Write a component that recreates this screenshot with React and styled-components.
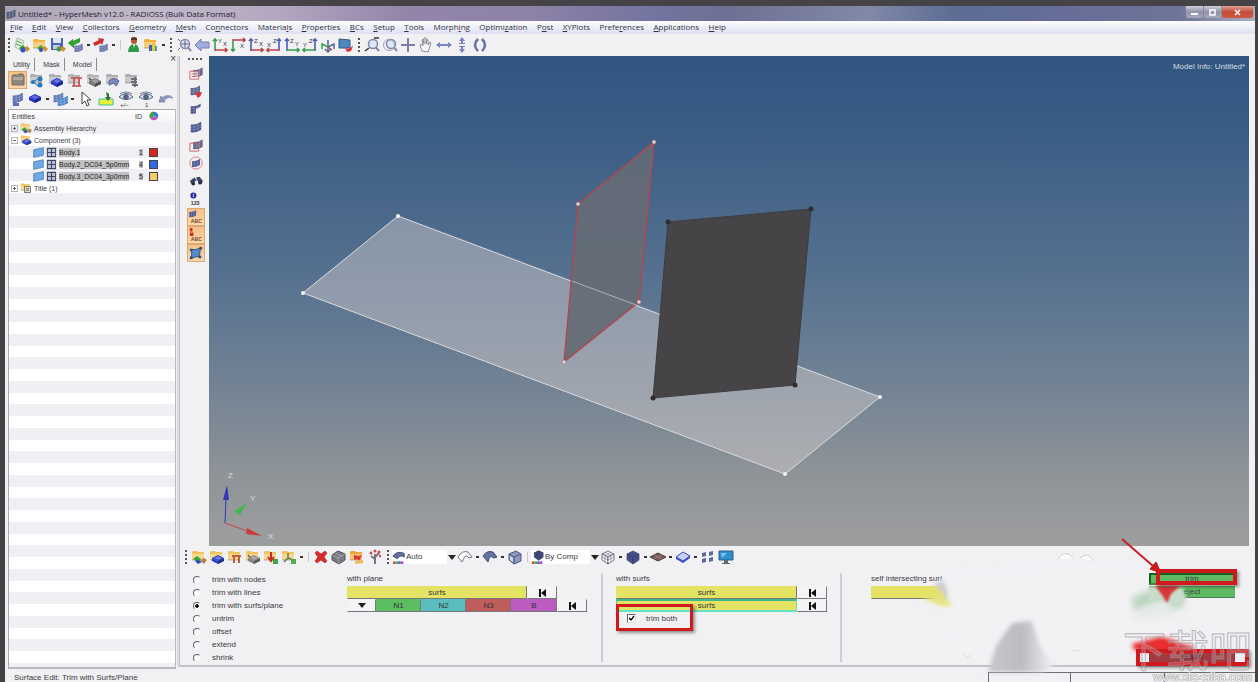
import React from "react";
import styled, { createGlobalStyle, css } from "styled-components";

const ui = `"Liberation Sans", Arial, sans-serif`;
const menuFont = `"Open Sans", "Noto Sans", sans-serif`;

const Global = createGlobalStyle`
  * { box-sizing: border-box; }
  body { margin: 0; background: #454346; font-family: ${ui}; font-size: 8px; line-height: 12px; color: #3c3b3f; }
  button, select, input { font: inherit; color: inherit; margin: 0; padding: 0; }
  svg { flex-shrink: 0; }
`;

const Page = styled.div`
  position: relative;
  display: flex;
  min-height: 100vh;
  padding: 6px 3px 0 5px;
  overflow: hidden;
`;
const Window = styled.div`
  flex: 1;
  min-width: 0;
  display: flex;
  flex-direction: column;
  background: #f1f0f3;
`;
const TitleBar = styled.header`
  display: flex;
  align-items: center;
  height: 15px;
  padding: 0 2px 0 0;
  gap: 1px;
  font-family: ${menuFont};
  color: #1f1b2c;
  background: linear-gradient(90deg, #aaa3b5 0, #c2bacb 12%, #b3a6bf 22%, #9385a9 32%, #8d82a8 42%, #73749f 52%, #6f7094 58%, #8189a8 69%, #5c6d94 76%, #666d98 85%, #6f7598 94%, #a8adc0 100%);
`;
const Title = styled.h1`
  flex: 1;
  margin: 0;
  font-size: 8px;
  font-weight: 400;
`;
const WinButton = styled.button`
  align-self: flex-start;
  display: flex;
  align-items: center;
  justify-content: center;
  width: ${(p) => (p.$close ? 31 : 17)}px;
  height: 12px;
  border: 0;
  border-radius: 0 0 2px 2px;
  background: ${(p) => (p.$close ? "linear-gradient(#dba295, #c64a36 50%, #cf5a44)" : "linear-gradient(#cfcfdb, #9292a8 50%, #a9a9bd)")};
`;
const MenuBar = styled.nav`
  height: 13px;
  padding-left: 5px;
  font-family: ${menuFont};
  background: linear-gradient(#fdfdff, #dde1f1);
`;
const MenuList = styled.div`
  display: flex;
  align-items: center;
  justify-content: space-between;
  max-width: 716px;
`;
const MenuItem = styled.button`
  border: 0;
  background: none;
  line-height: 12px;
  color: #33333d;
  white-space: nowrap;
`;
const Bar = styled.div`
  display: flex;
  align-items: center;
  flex-wrap: wrap;
  min-height: ${(p) => p.$h || 22}px;
  padding-left: ${(p) => p.$pad || 0}px;
`;
const Tool = styled.button`
  display: flex;
  align-items: center;
  justify-content: center;
  width: ${(p) => p.$w || 18}px;
  height: 18px;
  border: 0;
  background: none;
  ${(p) => p.$on && css`background: linear-gradient(#f6bf83, #fbd9ae); box-shadow: inset 0 0 0 1px #dca874;`}
`;
const Caret = styled.span`
  width: 3px;
  height: 2px;
  margin: 0 2px;
  background: #333;
`;
const Separator = styled.span`
  width: 1px;
  height: 10px;
  margin: 0 3px;
  background: #c9c8cc;
`;
const Grip = styled.span`
  ${(p) => p.$flat
    ? css`width: 16px; height: 2px; background: repeating-linear-gradient(90deg, #555 0 2px, transparent 2px 4px);`
    : css`width: 2px; height: 14px; margin: 0 3px; background: repeating-linear-gradient(#555 0 2px, transparent 2px 4px);`}
`;
const Body = styled.main`
  flex: 1;
  display: flex;
  min-height: 0;
`;
const Side = styled.aside`
  width: 173px;
  display: flex;
  flex-direction: column;
  padding: 0 2px 1px 3px;
  font-size: 7px;
`;
const TabRow = styled.div`
  display: flex;
  align-items: flex-end;
  height: 15px;
`;
const Tab = styled.button`
  height: 13px;
  padding: 0 4px 0 ${(p) => (p.$first ? 5 : 8)}px;
  border: 0;
  border-right: 1px solid #8c8b90;
  background: none;
`;
const CloseTab = styled.button`
  align-self: flex-start;
  margin-left: auto;
  height: 6px;
  border: 0;
  background: none;
  line-height: 4px;
  font-size: 10px;
`;
const TreeBox = styled.div`
  flex: 1;
  margin-top: 1px;
  border: 1px solid #a9a8ad;
  border-width: 1px 1px 2px 1px;
  border-color: #a9a8ad #bab9be #bab9be #a9a8ad;
  background: repeating-linear-gradient(#f0eff3 0 12px, #fff 12px 24px, #f0eff3 24px 36px, #fff 36px 47px) 0 12px;
`;
const Tree = styled.table`
  width: 100%;
  border-collapse: collapse;
  table-layout: fixed;
  th, td { height: 12px; padding: 0; font-weight: 400; text-align: left; line-height: 11px; vertical-align: middle; }
  thead { background: linear-gradient(#fff, #f3f2f5); }
  th { padding-left: 3px; }
  th + th { padding-left: 0; }
`;
const Col = styled.col`
  width: ${(p) => (p.$w ? `${p.$w}px` : "auto")};
`;
const Node = styled.div`
  display: flex;
  align-items: center;
  height: 11px;
  padding-left: ${(p) => (p.$deep ? 24 : 2)}px;
  gap: 2px;
  white-space: nowrap;
`;
const NodeName = styled.span`
  height: 9px;
  line-height: 9px;
  ${(p) => p.$sel && css`background: #c2c1c4; color: #222;`}
`;
const Expander = styled.span`
  width: 7px;
  height: 7px;
  border: 1px solid #b5b4b9;
  background:
    linear-gradient(#666, #666) center / 3px 1px no-repeat,
    ${(p) => (p.$open ? "none" : "linear-gradient(#666, #666) center / 1px 3px no-repeat")};
`;
const Swatch = styled.span`
  display: block;
  width: 9px;
  height: 9px;
  margin-left: 2px;
  border: 1px solid #45434a;
  background: ${(p) => p.$c};
`;
const Work = styled.section`
  flex: 1;
  min-width: 0;
  display: flex;
  flex-direction: column;
  margin: 0 6px 3px 1px;
  border-left: 1px solid #c3c2c7;
  border-bottom: 2px solid #c3c2c7;
  box-shadow: -2px 0 0 #dddce0;
`;
const Stage = styled.div`
  flex: 1;
  display: flex;
  min-height: 0;
`;
const Rail = styled.div`
  width: 29px;
  display: flex;
  flex-direction: column;
  align-items: center;
  padding: 2px 0 0 2px;
`;
const RailGrip = styled(Grip)`
  margin-bottom: 4px;
`;
const Viewport = styled.div`
  position: relative;
  flex: 1;
  min-width: 0;
  min-height: 490px;
  background: linear-gradient(#2f5580 0%, #3d5f86 18%, #56718f 45%, #738394 68%, #8f9498 86%, #9b9c9e 97%);
`;
const Scene = styled.svg`
  position: absolute;
  inset: 0;
  width: 100%;
  height: 100%;
`;
const ModelInfo = styled.div`
  position: absolute;
  top: 5px;
  right: 4px;
  color: #d5dde6;
`;
const Picker = styled.label`
  display: flex;
  align-items: center;
  width: ${(p) => p.$w}px;
  height: 14px;
  background: linear-gradient(#fff, #fff) 0 0 / calc(100% - 9px) 100% no-repeat;
`;
const Select = styled.select`
  flex: 1;
  min-width: 0;
  height: 14px;
  border: 0;
  appearance: none;
  background: none;
`;
const Panel = styled.form`
  display: grid;
  grid-template-columns: 167px 256px 239px minmax(100px, 1fr) 100px;
  min-height: 97px;
  padding-top: 5px;
`;
const Options = styled.fieldset`
  margin: 0;
  padding: 0 0 0 13px;
  border: 0;
`;
const Option = styled.label`
  display: flex;
  align-items: center;
  gap: 11px;
  height: 13px;
`;
const Radio = styled.input`
  appearance: none;
  width: 8px;
  height: 8px;
  border: 1px solid;
  border-color: #66656a #f4f4f6 #f4f4f6 #66656a;
  border-radius: 50%;
  background: #fbfafc;
  &:checked { background: radial-gradient(#222 0 2px, #fff 2px); }
`;
const Group = styled.div`
  margin-bottom: 3px;
  ${(p) => p.$rule && css`border-right: 2px solid #cfced2;`}
  ${(p) => p.$pad && css`padding-left: ${p.$pad}px;`}
`;
const Line = styled.div`
  display: flex;
  height: 13px;
`;
const Key = styled.button`
  display: flex;
  align-items: center;
  justify-content: center;
  width: ${(p) => p.$w}px;
  height: 13px;
  border: 1px solid;
  border-color: #f4f4f4 #77767a #77767a #f4f4f4;
  background: ${(p) => p.$c || "#f4f3f6"};
  color: #33333a;
  ${(p) => p.$c && css`border-top-color: ${p.$c}; border-left-color: ${p.$c};`}
  ${(p) => p.$active && css`border-color: #3fb98c #62e3c6 #62e3c6 #4cc59c; border-width: 2px 1px;`}
`;
const Actions = styled.div`
  display: flex;
  flex-direction: column;
`;
const Action = styled.div`
  position: relative;
  height: 13px;
  ${(p) => p.$last && css`margin: auto 0 1px;`}
`;
const ActionButton = styled.button`
  width: 86px;
  height: 12px;
  line-height: 8px;
  border: 1px solid ${(p) => (p.$focus ? "#16601f" : "#62ad67")};
  border-bottom-color: #487c4a;
  border-width: ${(p) => (p.$focus ? 2 : 1)}px;
  background: #5fbb63;
  ${(p) => p.$danger && css`background: #a33a42; border-color: #8f343b; color: #4a1418;`}
`;
const Mark = styled.span`
  position: absolute;
  z-index: 3;
  top: ${(p) => p.$t}px;
  left: ${(p) => p.$l}px;
  width: ${(p) => p.$w}px;
  height: ${(p) => p.$h}px;
  border: ${(p) => p.$b || 3}px solid #d0191d;
  box-shadow: 2px 2px 3px rgba(0, 0, 0, 0.4);
  pointer-events: none;
`;
const Check = styled.label`
  position: relative;
  display: flex;
  align-items: center;
  gap: 10px;
  width: 77px;
  height: 13px;
  padding-left: 11px;
`;
const Tick = styled.input`
  appearance: none;
  width: 9px;
  height: 9px;
  border: 1px solid;
  border-color: #66656a #ddd #ddd #66656a;
  background: #fff;
  &:checked { background: #fff url("data:image/svg+xml,%3Csvg xmlns='http://www.w3.org/2000/svg' viewBox='0 0 7 7'%3E%3Cpath d='M1 3l2 2 3-4' fill='none' stroke='%23000' stroke-width='1.4'/%3E%3C/svg%3E"); }
`;
const Status = styled.footer`
  display: flex;
  align-items: center;
  height: 14px;
  padding-left: 9px;
`;
const StatusText = styled.span`
  flex: 1;
  padding-top: 2px;
`;
const StatusCell = styled.span`
  align-self: flex-end;
  width: ${(p) => p.$w}px;
  height: 12px;
  border: solid #6c6b6f;
  border-width: 1px 0 0 1px;
`;
const Overlay = styled.svg`
  position: absolute;
  z-index: 2;
  right: 0;
  bottom: 0;
  width: 418px;
  height: 152px;
  pointer-events: none;
`;
const Watermark = styled.div`
  position: absolute;
  z-index: 4;
  right: 6px;
  bottom: 0;
  text-align: right;
  pointer-events: none;
`;
const MarkName = styled.div`
  font-family: "Noto Sans CJK SC", sans-serif;
  font-size: 43px;
  line-height: 44px;
  color: rgba(245, 245, 245, 0.2);
  -webkit-text-stroke: 1px rgba(150, 146, 150, 0.65);
`;
const MarkSite = styled.div`
  font-size: 12px;
  line-height: 14px;
  color: #fafafa;
  text-shadow: 0 0 1px #777, 0 0 1px #777;
`;

/* Shapes shared by the toolbar icons, on a 16 x 16 grid */
const Folder = ({ c = "#f2c45c" }) => (
  <g><path d="M1 3l1-1h4l1 1h6v8H1z" fill={c} /><path d="M1 5h12v6H1z" fill="#fff" opacity=".35" /><path d="M1 11h12" stroke="#000" opacity=".25" /></g>
);
const Slab = ({ c = "#2737c8", y = 0 }) => (
  <g transform={`translate(0 ${y})`}><path d="M3 9l6-3 6 3-6 3z" fill={c} /><path d="M3 9v3l6 3v-3z" fill={c} /><path d="M15 9v3l-6 3v-3z" fill={c} /><path d="M9 12v3l6-3V9z" fill="#000" opacity=".35" /><path d="M5 9l4-2 4 2-4 2z" fill="#fff" opacity=".3" /></g>
);
const Sheet = ({ c = "#5563a0", x = 0, y = 0, s = 1 }) => (
  <g transform={`translate(${x} ${y}) scale(${s})`}><path d="M2 5q6 1 12-3v9q-6 4-12 3z" fill={c} /><path d="M2 8q6 1 12-3M2 11q6 1 12-3M6 5v9M10 4v9" stroke="#dfe4f5" strokeWidth=".6" fill="none" opacity=".5" /></g>
);
const Cube = ({ c = "#4b5795" }) => (
  <g stroke="#26304f" strokeWidth=".6"><path d="M2 5l6-3 6 3-6 3z" fill={c} /><path d="M2 5v6l6 4V8z" fill={c} /><path d="M14 5v6l-6 4V8z" fill={c} /><path d="M5 3.500l6 3V13M11 3.500l-6 3V13M2 8l6 3 6-3" fill="none" opacity=".6" /></g>
);
const Arrow = ({ c, d }) => <path d={d} fill={c} stroke="#000" strokeOpacity=".2" strokeWidth=".5" />;
const Lens = () => (
  <g fill="none" stroke="#8288a8"><circle cx="9" cy="7" r="4.500" fill="#dfe6f5" strokeWidth="1.500" /><path d="M12 10.500l3 3.500" strokeWidth="2" /></g>
);
const Axes = ({ a = "#35a04a", b = "#c23f4a", m, t, u, tx = 3, ty = 6, ux = 11, uy = 9 }) => (
  <g><g fill="none" strokeWidth="1.600" transform={m}><path d="M3 14V2M1 4l2-2 2 2" stroke={a} /><path d="M3 13h12M13 11l2 2-2 2" stroke={b} /></g>
    <text x={tx + 3} y={ty} fontSize="6" fill="#333">{t}</text><text x={ux} y={uy} fontSize="6" fill="#333">{u}</text></g>
);
const Eye = () => (
  <g fill="none" stroke="#55607d"><path d="M1 6q7-7 14 0q-7 5-14 0z" fill="#dde3ee" /><circle cx="8" cy="6" r="2.400" fill="#54617f" /><path d="M2 3q6-4 12 0" strokeWidth=".8" /></g>
);
const Palette = () => (
  <g><path d="M1 13h3v3H1z" fill="#d43" /><path d="M4 13h3v3H4z" fill="#4b4" /><path d="M7 13h3v3H7z" fill="#46d" /><path d="M10 13h3v3h-3z" fill="#b4c" /></g>
);

const art = {
  app: <Sheet c="#4b5670" />,
  newFile: <><path d="M3 1l7 3-3 9-6-3z" fill="#e3f0e3" stroke="#7fae82" strokeWidth=".7" /><path d="M3 4l5 2M2 7l5 2" stroke="#4ea64c" /><path d="M5 11l4-3 3 3-4 3z" fill="#3f9d3c" /><path d="M10 11l3-2 3 3-3 3z" fill="#c99336" /><circle cx="9" cy="13" r="2.500" fill="#3451c0" /></>,
  open: <><Folder c="#efb740" /><path d="M5 11l4-3 3 3-4 3z" fill="#49a13f" /><path d="M10 11l3-2 3 3-3 3z" fill="#c99336" /><circle cx="9" cy="13" r="2" fill="#3451c0" /></>,
  save: <><path d="M1 1h12v12H1z" fill="#4a63b8" /><path d="M3 1h8v5H3z" fill="#dfe6f6" /><path d="M3 8h7v4H3z" fill="#c7cde0" /><circle cx="9" cy="12" r="2.500" fill="#3f9d3c" /><path d="M10 11l3-2 3 3-3 3z" fill="#c99336" /></>,
  importI: <><Sheet x={5} y={5} s={0.7} c="#6873a8" /><Arrow c="#2fa52d" d="M0 6l5-4v2l7-3v4L6 8v3z" /></>,
  exportI: <><Sheet x={5} y={5} s={0.7} c="#6873a8" /><Arrow c="#d43232" d="M11 2L5 1l1 2-6 3 2 3 6-3 1 2z" /></>,
  user: <><circle cx="9" cy="4" r="3" fill="#b3572e" /><path d="M6 1q3-2 6 0v2H6z" fill="#59361f" /><path d="M3 15q1-8 6-8t5 8z" fill="#2f9a45" /><path d="M8 7h2l-1 4z" fill="#fff" /></>,
  profile: <><Folder c="#eeb13c" /><path d="M6 8h3v6H6z" fill="#3764bd" /><path d="M9 6h3v8H9z" fill="#e6c33a" /><path d="M12 9h2v5h-2z" fill="#39a6a0" /></>,
  fit: <><Lens /><path d="M9 3.500v7M5.500 7h7M2 2l2 2M2 13l2-2" stroke="#5a6180" /></>,
  back: <path d="M1 8l6-6v3h8v6H7v3z" fill="#a4add9" stroke="#7580b4" />,
  yx: <Axes t="Y" u="X" />,
  xyDown: <Axes t="" u="X" m="matrix(1 0 0 -1 0 16)" ux={10} uy={11} />,
  zx: <Axes t="Z" u="X" a="#4560b8" />,
  xz: <Axes t="Z" u="X" a="#4560b8" m="matrix(-1 0 0 1 16 0)" tx={4} ux={1} uy={10} />,
  zy: <Axes t="Z" u="Y" a="#4560b8" b="#35a04a" />,
  yz: <Axes t="Z" u="Y" a="#4560b8" b="#35a04a" m="matrix(-1 0 0 1 16 0)" tx={4} ux={1} uy={10} />,
  iso: <g fill="none" strokeWidth="1.500"><path d="M8 10V3" stroke="#4560b8" /><path d="M8 10l-6-3v5" stroke="#35a04a" /><path d="M8 10l6-3v5M8 10v5M5 12l3 3 3-3" stroke="#5a6f96" /><path d="M8 10l4 3" stroke="#c23f4a" /></g>,
  screen: <><path d="M1 2l11 1v8L1 11z" fill="#4d87bd" stroke="#35587e" /><path d="M7 11l3 1 5-3-2 5-4 1z" fill="#d32f35" /></>,
  zoomOut: <><Lens /><path d="M1 14l4-3M10 1h5" stroke="#333" strokeWidth="1.500" /></>,
  zoomIn: <><Lens /><circle cx="7" cy="8" r="5.500" fill="none" stroke="#9aa0bd" /></>,
  plus: <path d="M8 1v14M1 8h14" stroke="#7c81a0" strokeWidth="2" />,
  hand: <path d="M4 14L2 8l1-1 2 2-1-6 1-1 1 5V1h2v6l1-5 1 1v5l2-3 1 1-3 9z" fill="#f7f6f8" stroke="#7a7880" strokeWidth=".8" />,
  horiz: <path d="M0 8l4-3v2h8V5l4 3-4 3V9H4v2z" fill="#7a83c2" />,
  vert: <path d="M8 0l3 4H9v2h2v1H5V6h2V4H5zM8 16l3-4H9v-2h2V9H5v1h2v2H5z" fill="#7a83c2" />,
  rotate: <g fill="none" stroke="#6971a3" strokeWidth="2.500"><path d="M6 2Q0 8 6 14M10 2q6 6 0 12" /></g>,
  vFolder: <g><path d="M2 4l1-1h5l1-1h4l1 2v9H2z" fill="#8e877d" stroke="#746d64" /><path d="M3 5h10v3H3z" fill="#c4bdb2" opacity=".6" /></g>,
  vTree: <><Folder c="#aeaeb2" /><path d="M4 10l5-3M4 10l5 4" stroke="#2678bd" /><g fill="#2678bd"><circle cx="4" cy="10" r="2" /><circle cx="11" cy="7" r="2.500" /><circle cx="11" cy="13" r="2.500" /></g></>,
  vComp: <><Folder c="#aeaeb2" /><Slab /></>,
  vProp: <><Folder c="#b4b4b7" /><path d="M4 6h11M7 6v8M12 6v8M5 14h9" stroke="#c24a43" strokeWidth="1.600" /></>,
  vMat: <><Folder c="#b4b4b7" /><path d="M3 6l4 4M4 11l3-3" stroke="#555" strokeWidth="1.500" /><Slab c="#77777c" /></>,
  vLoad: <><Folder c="#aeaeb2" /><path d="M4 9q5-5 10 0l-3 5-2-3-5 2z" fill="#8088bd" stroke="#565f98" /></>,
  vList: <><Folder c="#aeaeb2" /><path d="M7 7h6M7 10h6M8 13h6M11 5v10" stroke="#6b6b70" strokeWidth="1.800" /></>,
  sheetTall: <><Sheet x={2} y={0} s={0.85} c="#5872b0" /><path d="M4 12h6v3H4z" fill="#5872b0" /></>,
  slab: <g transform="translate(-1 -3)"><Slab c="#2130cb" /></g>,
  sheets: <><Sheet s={0.8} c="#6078b6" /><Sheet x={4} y={3} s={0.85} c="#4d87cb" /></>,
  cursor: <path d="M4 1v12l3-3 2 5 2-1-2-5h4z" fill="#fff" stroke="#444" />,
  put: <><path d="M1 8h14v6H1z" fill="#e6f03a" stroke="#35c6b0" /><path d="M8 1l3 2v3h2l-3 4-3-4h2z" fill="#2e6b2e" /></>,
  eyePm: <><Eye /><text x="2" y="16" fontSize="6" fill="#333">+/−</text></>,
  eyeOne: <><Eye /><text x="7" y="16" fontSize="6" fill="#333">1</text></>,
  undo: <path d="M1 11l2-6 1 2q6-5 11 0-5-2-9 2l1 2z" fill="#9095bd" stroke="#666c9c" strokeWidth=".6" />,
  mGeom: <><Sheet x={3} y={0} s={0.9} c="#5b5f83" /><path d="M1 6h10v9H1zM3 9h6M3 12h6" fill="#fff" fillOpacity=".6" stroke="#cf5a5c" /></>,
  mMask: <><Sheet s={0.9} c="#58628a" /><path d="M7 10l2-1 2 1 4-1-2 5-3 2z" fill="#d6333c" /></>,
  mRev: <><Sheet c="#49558b" s={0.95} /><path d="M8 8l6-3v6l-6 3z" fill="#f0f0f5" /></>,
  mAll: <Sheet c="#4c598f" />,
  mBox: <><Sheet x={3} s={0.9} c="#5b5f83" /><path d="M1 6h10v9H1z" fill="none" stroke="#cf5a5c" /></>,
  mCirc: <><Sheet x={2} y={2} s={0.75} c="#46548b" /><circle cx="8" cy="8" r="7" fill="none" stroke="#d97478" /></>,
  find: <g fill="#3b4667"><path d="M1 8l5-4 3 3-3 2v3H3z" /><path d="M8 4l4-1 4 5-2 3-3 1-1-4z" /><circle cx="5" cy="11" r="2" fill="#222a45" /><circle cx="13" cy="10" r="2" fill="#222a45" /></g>,
  num: <><circle cx="5" cy="4" r="3.500" fill="#2830a5" /><path d="M5 2v4" stroke="#dde" /><text x="2" y="15" fontSize="6" fontWeight="700" fill="#333">123</text></>,
  abcMesh: <><Sheet x={-1} y={-1} s={0.65} c="#485590" /><text x="2" y="15" fontSize="6" fontWeight="700" fill="#7b4c2e">ABC</text></>,
  abcRed: <><path d="M1 0h3v4H1zM1 5h4v4H1z" fill="#c62e2a" /><text x="2" y="15" fontSize="6" fontWeight="700" fill="#7b4c2e">ABC</text></>,
  surfHi: <><path d="M3 4q5 1 10-2l-1 10q-5 0-9 2z" fill="#568ace" stroke="#294983" /><g fill="#324c7a"><path d="M1 3h3v3H1zM12 1h3v3h-3zM1 12h3v3H1zM11 11h3v3h-3z" /></g></>,
  fAsm: <><Folder /><path d="M2 10l4-3 4 3-4 3z" fill="#3da33b" /><path d="M4 12l4-1 3 2-4 2z" fill="#2b49c0" /><path d="M9 11l4-2 3 2-3 4z" fill="#b98345" /></>,
  fComp: <><Folder /><Slab c="#2742c8" /></>,
  fProp: <><Folder /><path d="M5 7h9M7 7v7M12 7v7" stroke="#b9603f" strokeWidth="2" /></>,
  fMat: <><Folder /><path d="M3 6l5 5" stroke="#664" strokeWidth="1.500" /><Slab c="#88867c" /></>,
  fLoad: <><Folder /><path d="M8 3v7M5 8l3 4 3-4" stroke="#cb2a25" strokeWidth="2" fill="none" /><path d="M10 10h5v5h-5z" fill="#43a646" /></>,
  fSys: <><Folder /><path d="M7 4v5l-4 4M7 9l5 2" stroke="#607d55" strokeWidth="1.500" fill="none" /><path d="M10 10h5v5h-5z" fill="#55ab50" /></>,
  del: <path d="M2 4l2-2 4 3 4-3 2 2-3 4 3 4-2 2-4-3-4 3-2-2 3-4z" fill="#db2a2d" stroke="#a91e22" strokeWidth=".6" />,
  organize: <><path d="M1 6l6-4 7 3v6l-6 4-7-4z" fill="#777a83" stroke="#4e5058" /><path d="M1 6l6 3 7-4M7 9l1 6M4 4l7 3" stroke="#bbb" fill="none" opacity=".6" /></>,
  renumber: <><Folder c="#f0a532" /><path d="M5 6l4 1 4-1-3 6-2-2-3 1z" fill="#d6372e" /><path d="M6 12l8-1v3l-8 1z" fill="#edbc50" /></>,
  tree: <g fill="none"><path d="M8 15V5M8 10L4 7M8 8l4-4" stroke="#77737a" strokeWidth="2" /><g fill="#ce4b50"><circle cx="4" cy="4" r="1.500" /><circle cx="8" cy="2" r="1.500" /><circle cx="12" cy="3" r="1.500" /><circle cx="13" cy="7" r="1.200" /></g></g>,
  autoI: <><path d="M1 7q5-7 13-3v4q-5-3-8 2z" fill="#65719e" stroke="#3f4a78" /><Palette /></>,
  wire: <path d="M1 8q4-7 10-5l4 5-3 1q-3-4-5 0l-2 4z" fill="#f8f8fa" stroke="#77767d" />,
  shade: <path d="M1 7q4-6 10-4l4 5-3 1q-3-3-5 0l-1 4z" fill="#67739f" stroke="#414c78" />,
  box: <><path d="M2 5l7-3 5 3v7l-7 3-5-4z" fill="#8e98c5" stroke="#4c567f" /><path d="M2 5l5 3 7-3M7 8v7" stroke="#4c567f" fill="none" /><path d="M3 7l3 2v4l-3-2z" fill="#d5dbef" /></>,
  compI: <><g transform="translate(2 -1) scale(.85)"><Cube c="#414c80" /></g><Palette /></>,
  wireCube: <Cube c="#f6f6f8" />,
  solidCube: <Cube />,
  layer: <><path d="M0 8l8-4 8 4-8 4z" fill="#775b59" stroke="#4a3736" /><path d="M4 6l8 4M12 6l-8 4" stroke="#b28c86" strokeWidth=".6" /></>,
  layer2: <><path d="M1 8l7-5 7 4-7 5z" fill="#c9cff8" stroke="#3846bb" /><path d="M1 8v2l7 4 7-5V7l-7 5z" fill="#3e4dc5" /></>,
  shrinkI: <g fill="#5d6b9c"><path d="M2 4l4-1v4L2 8zM9 3l4-1v4L9 7zM2 10l4-1v4l-4 1zM9 9l4-1v4l-4 1z" /></g>,
  monitor: <><path d="M1 2h14v9H1z" fill="#2f8fcb" stroke="#2b5f87" /><path d="M3 4h6l-5 5z" fill="#7cc4e8" /><path d="M6 11h4v3H6zM4 14h8v1H4z" fill="#5c6b76" /></>,
  rgb: <><path d="M8 8V1a7 7 0 0 1 6 10z" fill="#2f7de0" /><path d="M8 8l6 3a7 7 0 0 1-12 1z" fill="#c94fb8" /><path d="M8 8l-6 4A7 7 0 0 1 8 1z" fill="#3c9f4a" /><circle cx="8" cy="8" r="1" fill="#f2e04a" /></>,
  surf: <path d="M1 4l14-3v11L1 15z" fill="#6ea9e6" stroke="#3a6cab" />,
  grid: <><path d="M2 2h12v12H2z" fill="#b9bfd5" stroke="#3b4566" strokeWidth="1.500" /><path d="M8 2v12M2 8h12" stroke="#3b4566" strokeWidth="1.500" /></>,
  titleF: <><Folder /><path d="M6 6h8v8H6z" fill="#dcd9cc" stroke="#5d5a50" /><path d="M8 9h4M8 11h4" stroke="#5d5a50" /></>,
};

const Icon = ({ n, s = 16 }) => (
  <svg width={s} height={s} viewBox="0 0 16 16" aria-hidden="true">{art[n]}</svg>
);
const Tools = ({ items, w }) =>
  items.map((n, i) => {
    if (n === "|") return <Separator key={i} />;
    if (n === ":") return <Grip key={i} />;
    if (n === "v") return <Caret key={i} />;
    return <Tool key={i} type="button" $w={w} aria-label={n}><Icon n={n} /></Tool>;
  });
const Down = () => <svg width="8" height="5" viewBox="0 0 8 5" aria-hidden="true"><path d="M0 0h8L4 5z" fill="#222" /></svg>;
const Reset = () => (
  <Key type="button" $w={30} aria-label="reset">
    <svg width="9" height="8" viewBox="0 0 9 8" aria-hidden="true"><path d="M1 0h2v8H1zM8 0v8L3 4z" fill="#111" /></svg>
  </Key>
);

const menus = ["_File", "_Edit", "_View", "_Collectors", "_Geometry", "_Mesh", "Co_nnectors", "Materia_ls", "_Properties", "_BCs", "_Setup", "_Tools", "Morph_ing", "Optimi_zation", "P_ost", "_XYPlots", "Prefe_rences", "_Applications", "_Help"];
const bodies = [["Body.1", "1", "#d9261c"], ["Body.2_DC04_5p0mm", "4", "#2f6be0"], ["Body.3_DC04_3p0mm", "5", "#f2cd6c"]];
const modes = ["trim with nodes", "trim with lines", "trim with surfs/plane", "untrim", "offset", "extend", "shrink"];
const rail = ["mGeom", "mMask", "mRev", "mAll", "mBox", "mCirc", "find", "num", "abcMesh", "abcRed", "surfHi"];
const yellow = "#e4e364";

function ModelScene() {
  return (
    <Scene viewBox="0 0 1040 490" preserveAspectRatio="none">
      <path d="M189 160L94 237l482 181 95-77z" fill="#d6d0d0" fillOpacity=".44" stroke="#dcdcde" />
      <path d="M445 86l-76 62-14 158 75-60z" fill="#646c75" fillOpacity=".93" stroke="#b9434f" strokeWidth="1.300" />
      <path d="M363 225l67 25" stroke="#c9c9cc" opacity=".7" />
      <path d="M602 153l-143 13-15 176 142-13z" fill="#464446" stroke="#3f3d3f" />
      <g fill="#f4f4f4"><circle cx="189" cy="160" r="2" /><circle cx="94" cy="237" r="2" /><circle cx="576" cy="418" r="2" /><circle cx="671" cy="341" r="2" /></g>
      <g fill="#e0d8da" stroke="#8f5a62" strokeWidth=".5"><circle cx="445" cy="86" r="2" /><circle cx="369" cy="148" r="2" /><circle cx="355" cy="306" r="2" /><circle cx="430" cy="246" r="2" /></g>
      <g fill="#2d2c2e"><circle cx="602" cy="153" r="2.500" /><circle cx="459" cy="166" r="2.500" /><circle cx="444" cy="342" r="2.500" /><circle cx="586" cy="329" r="2.500" /></g>
      <path d="M16 467l1-24" stroke="#3537b5" /><path d="M18 429l-4 15h6z" fill="#3537b5" />
      <path d="M17 466l12-9" stroke="#6ab374" /><path d="M38 447l-7 12-6-4z" fill="#49b552" />
      <path d="M16 467l22 8" stroke="#cc4747" /><path d="M53 480l-16-2 1-6z" fill="#cc3b3b" />
      <g fill="#dcdde0" fontSize="8"><text x="19" y="422">Z</text><text x="41" y="445">Y</text><text x="59" y="483">X</text></g>
    </Scene>
  );
}

function Smudges() {
  return (
    <Overlay viewBox="0 0 418 152">
      <defs>
        <filter id="s1"><feGaussianBlur stdDeviation="1" /></filter>
        <filter id="s2"><feGaussianBlur stdDeviation="2" /></filter>
        <filter id="s3"><feGaussianBlur stdDeviation="3" /></filter>
        <linearGradient id="wedge" x1="0" x2="1"><stop offset="0" stopColor="#c9c7ca" /><stop offset=".5" stopColor="#bdbbbf" /><stop offset="1" stopColor="#f0eff2" /></linearGradient>
      </defs>
      <path d="M101 40l183-10 24 24-10 56-20 14H120L108 84z" fill="#f2f1f4" filter="url(#s2)" />
      <path d="M82 66l22-4 8 13-14-2z" fill="#e6e47c" filter="url(#s2)" />
      <path d="M93 52l11-4 5 20z" fill="#cfcdd3" filter="url(#s2)" />
      <path d="M148 140l8-26 16-23 20-2 8 25 14 22-14 4z" fill="url(#wedge)" filter="url(#s2)" />
      <g fill="none" stroke="#d1d0d4"><path d="M218 27q7-11 15-1M240 26q8-7 14 3" fill="#fbfbfc" /><path d="M124 122q4 6 7 0M231 120q5-4 10 0" opacity=".7" /></g>
      <path d="M296 60l46-4 4 18-14 10-40 4z" fill="#e6ebe8" filter="url(#s3)" />
      <path d="M292 66l20-8 8 10-26 10zM328 70l14-4 2 8-12 2z" fill="#a9c9ac" opacity=".7" filter="url(#s3)" />
      <path d="M308 55l34 2 4 12-10 2-26-2z" fill="#c9dccb" filter="url(#s1)" />
      <path d="M315 54h25l-9 8-4 9-5-8z" fill="#d5393a" filter="url(#s1)" />
      <path d="M292 112l12-3 16-4 10 2 12 5 12 3-2 4-30 2-28-3z" fill="#e92d2f" filter="url(#s2)" />
      <path d="M300 116l20-8 24 8-20 3z" fill="#e92d2f" filter="url(#s1)" />
      <path d="M282 7l31 27" stroke="#c92027" strokeWidth="2" />
      <path d="M321 41l-11-4 6-7z" fill="#d0191d" stroke="#b01a20" />
    </Overlay>
  );
}

export default function App() {
  return (
    <>
      <Global />
      <Page>
        <Window>
          <TitleBar>
            <Icon n="app" s={12} />
            <Title>Untitled* - HyperMesh v12.0 - RADIOSS (Bulk Data Format)</Title>
            <WinButton aria-label="Minimize"><svg width="7" height="7" viewBox="0 0 7 7"><path d="M0 4h7v2H0z" fill="#fff" /></svg></WinButton>
            <WinButton aria-label="Maximize"><svg width="7" height="7" viewBox="0 0 7 7"><path d="M1 1h5v5H1z" fill="none" stroke="#fff" strokeWidth="1.500" /></svg></WinButton>
            <WinButton $close aria-label="Close"><svg width="7" height="7" viewBox="0 0 7 7"><path d="M1 1l5 5M6 1L1 6" stroke="#fff" strokeWidth="1.500" /></svg></WinButton>
          </TitleBar>
          <MenuBar>
            <MenuList>
              {menus.map((m) => {
                const [a, b] = m.split("_");
                return <MenuItem key={m} type="button">{a}<u>{b[0]}</u>{b.slice(1)}</MenuItem>;
              })}
            </MenuList>
          </MenuBar>
          <Bar $h={22}>
            <Tools items={[":", "newFile", "open", "save", "importI", "v", "exportI", "v", "|", "user", "profile", "v", ":", "fit", "back", "yx", "xyDown", "zx", "xz", "zy", "yz", "iso", "screen", ":", "zoomOut", "zoomIn", "plus", "hand", "horiz", "vert", "rotate"]} />
          </Bar>
          <Body>
            <Side>
              <TabRow>
                <Tab type="button" $first>Utility</Tab>
                <Tab type="button">Mask</Tab>
                <Tab type="button">Model</Tab>
                <CloseTab type="button" aria-label="Close tab">×</CloseTab>
              </TabRow>
              <Bar $h={18}>
                <Tool type="button" $on $w={19} aria-label="vFolder"><Icon n="vFolder" /></Tool>
                <Tools w={19} items={["vTree", "vComp", "vProp", "vMat", "vLoad", "vList"]} />
              </Bar>
              <Bar $h={19}>
                <Tools items={["sheetTall", "slab", "v", "sheets", "v"]} />
                <Tools w={20} items={["cursor", "put", "eyePm", "eyeOne", "undo"]} />
              </Bar>
              <TreeBox>
                <Tree>
                  <colgroup><Col /><Col $w={12} /><Col $w={28} /></colgroup>
                  <thead><tr><th>Entities</th><th>ID</th><th><Node><Icon n="rgb" s={10} /></Node></th></tr></thead>
                  <tbody>
                    <tr><td><Node><Expander /><Icon n="fAsm" s={12} /><NodeName>Assembly Hierarchy</NodeName></Node></td><td /><td /></tr>
                    <tr><td><Node><Expander $open /><Icon n="fComp" s={12} /><NodeName>Component (3)</NodeName></Node></td><td /><td /></tr>
                    {bodies.map(([name, id, c]) => (
                      <tr key={id}>
                        <td><Node $deep><Icon n="surf" s={11} /><Icon n="grid" s={11} /><NodeName $sel>{name}</NodeName></Node></td>
                        <td>&nbsp;&nbsp;<NodeName $sel>{id}</NodeName></td>
                        <td><Swatch $c={c} /></td>
                      </tr>
                    ))}
                    <tr><td><Node><Expander /><Icon n="titleF" s={12} /><NodeName>Title (1)</NodeName></Node></td><td /><td /></tr>
                  </tbody>
                </Tree>
              </TreeBox>
            </Side>
            <Work>
              <Stage>
                <Rail>
                  <RailGrip $flat />
                  {rail.map((n, i) => <Tool key={n} type="button" $on={i > 7} aria-label={n}><Icon n={n} s={14} /></Tool>)}
                </Rail>
                <Viewport>
                  <ModelScene />
                  <ModelInfo>Model Info: Untitled*</ModelInfo>
                </Viewport>
              </Stage>
              <Bar $h={22} $pad={2}>
                <Tools items={[":", "fAsm", "fComp", "fProp", "fMat", "fLoad", "fSys", "v", "|", "del", "organize", "renumber", "tree", ":"]} />
                <Picker $w={64}><Icon n="autoI" s={14} /><Select aria-label="Color mode"><option>Auto</option></Select><Down /></Picker>
                <Tools items={["wire", "v", "shade", "v", "box", "|"]} />
                <Picker $w={68}><Icon n="compI" s={14} /><Select aria-label="Element color mode"><option>By Comp</option></Select><Down /></Picker>
                <Tools items={["wireCube", "v", "solidCube", "v", "layer", "v", "layer2", "v", "shrinkI", "monitor"]} />
              </Bar>
              <Panel>
                <Options>
                  {modes.map((m, i) => (
                    <Option key={m}><Radio type="radio" name="mode" defaultChecked={i === 2} />{m}</Option>
                  ))}
                </Options>
                <Group $rule>
                  <Line>with plane</Line>
                  <Line><Key type="button" $w={180} $c={yellow}>surfs</Key><Reset /></Line>
                  <Line>
                    <Key type="button" $w={29} aria-label="plane type"><Down /></Key>
                    <Key type="button" $w={45} $c="#5bbd5f">N1</Key>
                    <Key type="button" $w={45} $c="#5bbcbd">N2</Key>
                    <Key type="button" $w={45} $c="#bf5c5c">N3</Key>
                    <Key type="button" $w={46} $c="#bd5cc0">B</Key>
                    <Reset />
                  </Line>
                </Group>
                <Group $rule $pad={13}>
                  <Line>with surfs</Line>
                  <Line><Key type="button" $w={181} $c={yellow}>surfs</Key><Reset /></Line>
                  <Line><Key type="button" $w={181} $c={yellow} $active>surfs</Key><Reset /></Line>
                  <Check><Tick type="checkbox" defaultChecked />trim both<Mark $t={-8} $l={0} $w={77} $h={27} /></Check>
                </Group>
                <Group $pad={29}>
                  <Line>self intersecting surf</Line>
                  <Line><Key type="button" $w={75} $c={yellow} aria-label="self intersecting surfs" /></Line>
                </Group>
                <Actions>
                  <Action><ActionButton type="button" $focus>trim</ActionButton><Mark $t={-4} $l={7} $w={81} $h={16} $b={4} /></Action>
                  <Action><ActionButton type="button">eject</ActionButton></Action>
                  <Action $last><ActionButton type="button" $danger>return</ActionButton><Mark $t={-2} $l={-13} $w={113} $h={17} $b={4} /></Action>
                </Actions>
              </Panel>
            </Work>
          </Body>
          <Status>
            <StatusText>Surface Edit: Trim with Surfs/Plane</StatusText>
            <StatusCell $w={82} /><StatusCell $w={94} /><StatusCell $w={91} />
          </Status>
        </Window>
        <Smudges />
        <Watermark><MarkName>下载吧</MarkName><MarkSite>www.xiazaiba.com</MarkSite></Watermark>
      </Page>
    </>
  );
}
